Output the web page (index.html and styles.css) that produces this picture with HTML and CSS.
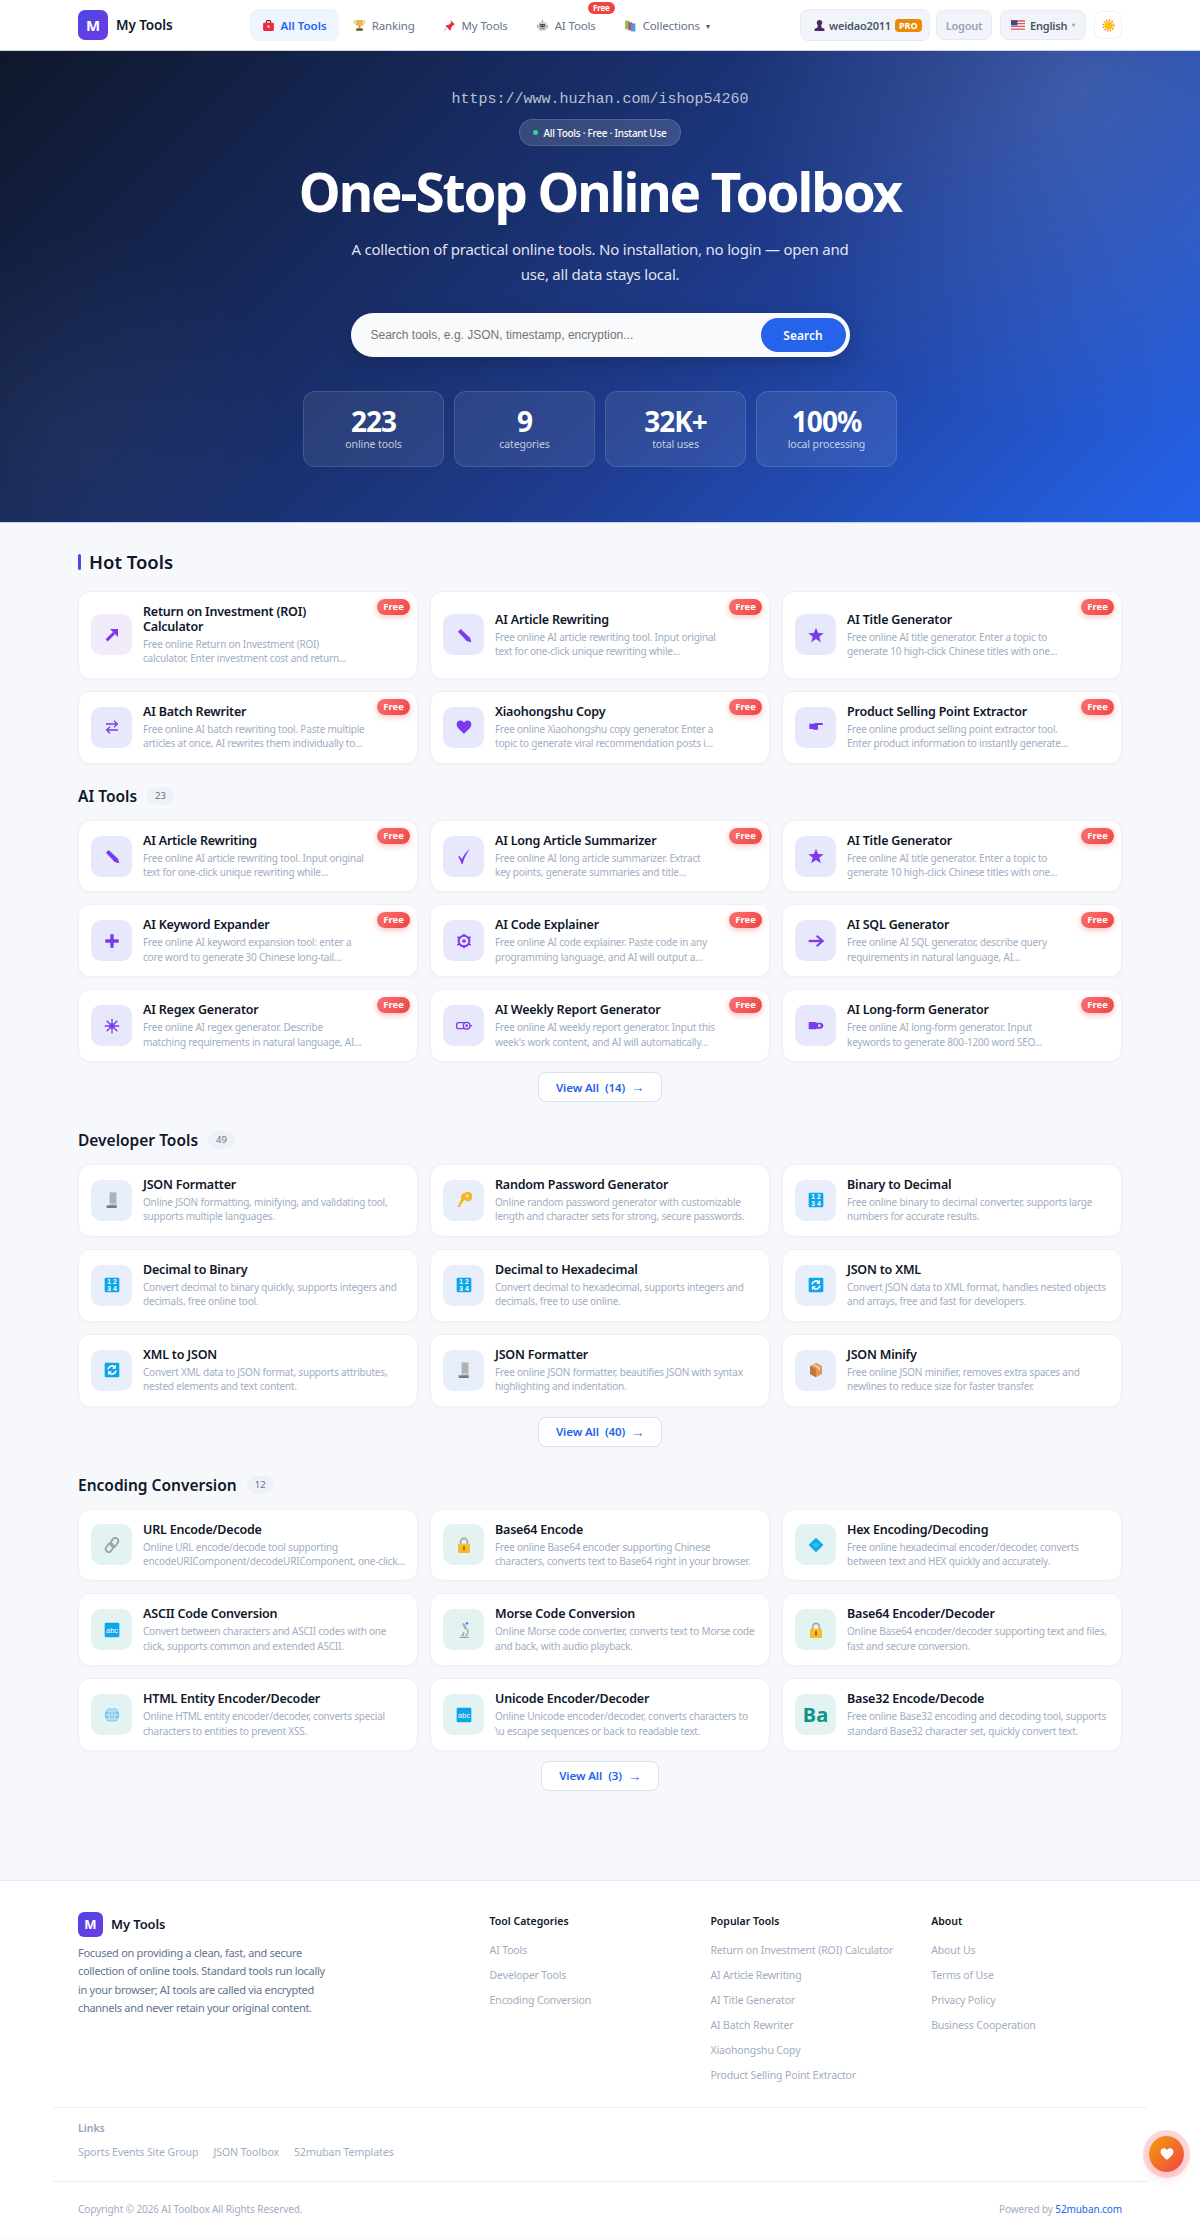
FILE: index.html
```html
<!DOCTYPE html>
<html lang="en">
<head>
    <meta charset="UTF-8">
    <meta name="viewport" content="width=device-width, initial-scale=1.0">
    <title>My Tools - One-Stop Online Toolbox</title>
    <link rel="stylesheet" href="styles.css">
</head>
<body>
    <!-- Icon sprite -->
    <svg class="sprite" xmlns="http://www.w3.org/2000/svg">
        <symbol id="i-toolbox" viewBox="0 0 24 24"><path d="M8 8V5a2 2 0 0 1 2-2h4a2 2 0 0 1 2 2v3" fill="none" stroke="#7f1d1d" stroke-width="2"/><rect x="2" y="7" width="20" height="15" rx="2" fill="#ef2b3a"/><rect x="10" y="12" width="4" height="4" fill="#fde2e2"/></symbol>
        <symbol id="i-trophy" viewBox="0 0 24 24"><path d="M6 2h12v6a6 6 0 0 1-12 0z" fill="#e5b64a"/><path d="M6 4H2c0 4 2 6 5 6M18 4h4c0 4-2 6-5 6" fill="none" stroke="#d7a437" stroke-width="1.6"/><rect x="10.5" y="13" width="3" height="4" fill="#c9962c"/><rect x="6" y="17" width="12" height="5" fill="#7a5a3a"/></symbol>
        <symbol id="i-pin" viewBox="0 0 24 24"><path d="M14 2l8 8-3 1-4 5 0 4-2 1-8-8 1-2 4 0 5-4z" fill="#e8303a"/><path d="M7 16l-5 6" stroke="#a8a8b0" stroke-width="1.6"/></symbol>
        <symbol id="i-robot" viewBox="0 0 24 24"><rect x="4" y="6" width="16" height="15" rx="4" fill="#c8ccd4"/><rect x="7" y="9" width="10" height="6" rx="2" fill="#3f4654"/><circle cx="9.5" cy="12" r="1.2" fill="#7dd3fc"/><circle cx="14.5" cy="12" r="1.2" fill="#7dd3fc"/><rect x="8" y="17" width="8" height="2" fill="#e0646c"/><rect x="11" y="2" width="2" height="4" fill="#e0646c"/><rect x="2" y="11" width="2" height="5" fill="#9aa1ad"/><rect x="20" y="11" width="2" height="5" fill="#9aa1ad"/></symbol>
        <symbol id="i-books" viewBox="0 0 24 24"><rect x="2" y="3" width="8" height="16" fill="#8bc34a"/><rect x="8" y="6" width="7" height="15" fill="#c2497e"/><rect x="13" y="8" width="8" height="15" fill="#4a9edb"/></symbol>
        <symbol id="i-user" viewBox="0 0 24 24"><circle cx="12" cy="7" r="5" fill="#4a2a5e"/><path d="M9 11h6l1 5 5 2v4H3v-4l5-2z" fill="#4a2a5e"/></symbol>
        <symbol id="i-flag" viewBox="0 0 24 16"><rect width="24" height="16" fill="#f4f4f6"/><path d="M0 0h24v2.3H0zM0 4.6h24v2.3H0zM0 9.2h24v2.3H0zM0 13.8h24V16H0z" fill="#d9535f"/><rect width="11" height="8.5" fill="#3c4a8a"/></symbol>
        <symbol id="i-sun" viewBox="0 0 24 24"><circle cx="12" cy="12" r="8" fill="#ffc107"/><circle cx="12" cy="12" r="10" fill="none" stroke="#f4701e" stroke-width="2.4" stroke-dasharray="2.6 2.6"/></symbol>
        <symbol id="i-up" viewBox="0 0 24 24"><path d="M4 20L15 9" stroke="currentColor" stroke-width="4.500"/><path d="M9 3H21V15z" fill="currentColor"/></symbol>
        <symbol id="i-pencil" viewBox="0 0 24 24"><path d="M3 7l4-4 14 13 2 7-7-2z" fill="currentColor"/></symbol>
        <symbol id="i-star" viewBox="0 0 24 24"><path d="M12 1l3.100 8 8.400.3-6.600 5.300 2.300 8.200-7.200-4.700-7.200 4.700 2.300-8L.5 9.300 8.900 9z" fill="currentColor"/></symbol>
        <symbol id="i-swap" viewBox="0 0 24 24"><path d="M3 8h17M15 3l5 5-5 5M21 17H4M9 12l-5 5 5 5" fill="none" stroke="currentColor" stroke-width="2" transform="translate(0 -.5)"/></symbol>
        <symbol id="i-heart" viewBox="0 0 24 24"><path d="M12 22C5 16 1 12.500 1 8a5.800 5.800 0 0 1 11-2.600A5.800 5.800 0 0 1 23 8c0 4.500-4 8-11 14z" fill="currentColor"/></symbol>
        <symbol id="i-hand" viewBox="0 0 24 24"><path d="M2 7h6l3-1h11v3h-7v7H8l-1-1H2z" fill="currentColor"/></symbol>
        <symbol id="i-check" viewBox="0 0 24 24"><path d="M3 13l2-1 4 5C11 11 15 6 21 1c-5 7-9 14-11 23H8.500C7 19 5.500 16 3 13z" fill="currentColor"/></symbol>
        <symbol id="i-plus" viewBox="0 0 24 24"><path d="M9.500 2h5v7.500H22v5h-7.500V22h-5v-7.500H2v-5h7.500z" fill="currentColor"/></symbol>
        <symbol id="i-gear" viewBox="0 0 24 24"><circle cx="12" cy="12" r="8" fill="none" stroke="currentColor" stroke-width="3"/><circle cx="12" cy="12" r="2.800" fill="currentColor"/><path d="M12 1v3M12 20v3M2 6l2.500 1.500M22 6l-2.500 1.500M2 18l2.500-1.500M22 18l-2.500-1.500" stroke="currentColor" stroke-width="2.500"/></symbol>
        <symbol id="i-arrow" viewBox="0 0 24 24"><path d="M1 12h19" stroke="currentColor" stroke-width="3.500"/><path d="M13 4l9 8-9 8" fill="none" stroke="currentColor" stroke-width="3"/></symbol>
        <symbol id="i-spark" viewBox="0 0 24 24"><path d="M12 1v22M1 12h22M4 4l16 16M20 4L4 20" stroke="currentColor" stroke-width="2"/><circle cx="12" cy="12" r="4" fill="currentColor"/></symbol>
        <symbol id="i-tag" viewBox="0 0 24 24"><path d="M13 7H4a3 3 0 0 0-3 3v3a3 3 0 0 0 3 3h9" fill="none" stroke="currentColor" stroke-width="2"/><circle cx="16" cy="11.500" r="5" fill="none" stroke="currentColor" stroke-width="2"/><circle cx="16" cy="11.500" r="2" fill="currentColor"/><path d="M21 11.500h3" stroke="currentColor" stroke-width="2"/></symbol>
        <symbol id="i-pen" viewBox="0 0 24 24"><rect x="1" y="6" width="11" height="11" rx="1" fill="currentColor"/><path d="M12 7h6c3 0 5 2 5 4.500s-2 4.500-5 4.500h-6z" fill="currentColor"/><circle cx="17" cy="11.500" r="2" fill="#e6e6fb"/></symbol>
        <symbol id="i-abacus" viewBox="0 0 24 24"><rect x="8" y="0" width="11" height="21" fill="#c6c9cd"/><path d="M9 3h9M9 6h9M9 9h9M9 12h9M9 15h9" stroke="#8b8f96" stroke-width="1.200"/><rect x="4" y="20" width="15" height="4" fill="#76797f"/></symbol>
        <symbol id="i-key" viewBox="0 0 24 24"><path d="M14 1a7 7 0 0 0-6 10L2 22l4 1 1-4 2-1 1-3 3-3a7 7 0 1 0 1-11zm3 3a2 2 0 1 1-.1 0z" fill="#f4b62c" fill-rule="evenodd"/></symbol>
        <symbol id="i-num" viewBox="0 0 24 24"><rect x="1" y="1" width="22" height="22" rx="2" fill="#0ea5e9"/><text x="12" y="11" class="sprite-text" text-anchor="middle">1 2</text><text x="12" y="21" class="sprite-text" text-anchor="middle">3 4</text></symbol>
        <symbol id="i-sync" viewBox="0 0 24 24"><rect x="1" y="1" width="22" height="22" rx="2" fill="#0ea5e9"/><path d="M6 11a6 6 0 0 1 10-3.500M18 13a6 6 0 0 1-10 3.500" fill="none" stroke="#fff" stroke-width="2.400"/><path d="M18 4v6h-6zM6 20v-6h6z" fill="#fff"/></symbol>
        <symbol id="i-box" viewBox="0 0 24 24"><path d="M12 1l9 5v12l-9 5-9-5V6z" fill="#d99a5b"/><path d="M12 11v12l-9-5V6z" fill="#b97a3e"/><path d="M6 4.300l9 5v4l3-1.600v-4l-9-5z" fill="#f3cf96"/></symbol>
        <symbol id="i-link" viewBox="0 0 24 24"><g fill="none" stroke="#9a9da3" stroke-width="2.600"><rect x="11" y="1" width="9" height="14" rx="4.500" transform="rotate(35 15.500 8)"/><rect x="4" y="9" width="9" height="14" rx="4.500" transform="rotate(35 8.500 16)"/></g></symbol>
        <symbol id="i-lock" viewBox="0 0 24 24"><path d="M7 11V7a5 5 0 0 1 10 0v4" fill="none" stroke="#a6a9ae" stroke-width="2.600"/><rect x="3" y="10" width="18" height="14" rx="2" fill="#f5bd2e"/><rect x="11" y="14" width="2" height="6" fill="#6b4e0a"/></symbol>
        <symbol id="i-diamond" viewBox="0 0 24 24"><path d="M12 1l11 11-11 11L1 12z" fill="#0ea5e9"/><path d="M12 7l5 5-5 5-5-5z" fill="#38bdf8"/></symbol>
        <symbol id="i-abc" viewBox="0 0 24 24"><rect x="1" y="1" width="22" height="22" rx="2" fill="#0ea5e9"/><text x="12" y="16" class="sprite-abc" text-anchor="middle">abc</text></symbol>
        <symbol id="i-scope" viewBox="0 0 24 24"><path d="M5 22h14v2H5zM8 21l3-6 2 1-2 5z" fill="#9da1a8"/><path d="M9 3l3-2 5 9-3 2z" fill="#a7abb2"/><path d="M14 1l3-1 2 3-3 1z" fill="#3b82f6"/><path d="M17 11c2 3 1 8-3 10" fill="none" stroke="#9da1a8" stroke-width="2"/></symbol>
        <symbol id="i-globe" viewBox="0 0 24 24"><circle cx="12" cy="12" r="11" fill="#7cc4ef"/><g fill="none" stroke="#dff1fc" stroke-width="1.200"><ellipse cx="12" cy="12" rx="5" ry="11"/><path d="M12 1v22M1 12h22M3 6h18M3 18h18"/></g></symbol>
    </svg>

    <header class="topbar">
        <a class="brand">
            <span class="brand-logo">M</span>
            <span class="brand-name">My Tools</span>
        </a>
        <nav class="main-nav">
            <a class="nav-link active"><svg class="nav-icon"><use href="#i-toolbox"/></svg>All Tools</a>
            <a class="nav-link"><svg class="nav-icon"><use href="#i-trophy"/></svg>Ranking</a>
            <a class="nav-link"><svg class="nav-icon"><use href="#i-pin"/></svg>My Tools</a>
            <a class="nav-link nav-ai"><svg class="nav-icon"><use href="#i-robot"/></svg>AI Tools<span class="nav-free">Free</span></a>
            <a class="nav-link"><svg class="nav-icon"><use href="#i-books"/></svg>Collections<span class="caret">▾</span></a>
        </nav>
        <div class="nav-right">
            <div class="user-chip"><svg class="nav-icon"><use href="#i-user"/></svg>weidao2011<span class="pro-tag">PRO</span></div>
            <button class="ghost-btn">Logout</button>
            <button class="ghost-btn lang-btn"><svg class="flag"><use href="#i-flag"/></svg>English<span class="caret small">▾</span></button>
            <button class="theme-btn"><svg class="nav-icon"><use href="#i-sun"/></svg></button>
        </div>
    </header>

    <section class="hero">
        <p class="hero-url">https://www.huzhan.com/ishop54260</p>
        <div class="hero-pill"><span class="dot"></span>All Tools · Free · Instant Use</div>
        <h1>One-Stop Online Toolbox</h1>
        <p class="hero-sub">A collection of practical online tools. No installation, no login — open and use, all data stays local.</p>
        <form class="search-box">
            <input type="text" placeholder="Search tools, e.g. JSON, timestamp, encryption...">
            <button type="button">Search</button>
        </form>
        <div class="stats">
            <div class="stat"><strong>223</strong><span>online tools</span></div>
            <div class="stat"><strong>9</strong><span>categories</span></div>
            <div class="stat"><strong>32K+</strong><span>total uses</span></div>
            <div class="stat"><strong>100%</strong><span>local processing</span></div>
        </div>
    </section>

    <main class="content">
        <section class="tool-section hot">
            <h2 class="hot-title">Hot Tools</h2>
            <div class="tool-grid">
                <a class="tool-card tagged"><span class="tool-icon tint-roi"><svg><use href="#i-up"/></svg></span><div class="tool-text"><h3>Return on Investment (ROI) Calculator</h3><p>Free online Return on Investment (ROI) calculator. Enter investment cost and return...</p></div><span class="free-tag">Free</span></a>
                <a class="tool-card tagged"><span class="tool-icon tint-ai"><svg><use href="#i-pencil"/></svg></span><div class="tool-text"><h3>AI Article Rewriting</h3><p>Free online AI article rewriting tool. Input original text for one-click unique rewriting while...</p></div><span class="free-tag">Free</span></a>
                <a class="tool-card tagged"><span class="tool-icon tint-ai"><svg><use href="#i-star"/></svg></span><div class="tool-text"><h3>AI Title Generator</h3><p>Free online AI title generator. Enter a topic to generate 10 high-click Chinese titles with one...</p></div><span class="free-tag">Free</span></a>
                <a class="tool-card tagged"><span class="tool-icon tint-ai"><svg><use href="#i-swap"/></svg></span><div class="tool-text"><h3>AI Batch Rewriter</h3><p>Free online AI batch rewriting tool. Paste multiple articles at once, AI rewrites them individually to...</p></div><span class="free-tag">Free</span></a>
                <a class="tool-card tagged"><span class="tool-icon tint-ai"><svg><use href="#i-heart"/></svg></span><div class="tool-text"><h3>Xiaohongshu Copy</h3><p>Free online Xiaohongshu copy generator. Enter a topic to generate viral recommendation posts i...</p></div><span class="free-tag">Free</span></a>
                <a class="tool-card tagged"><span class="tool-icon tint-ai"><svg><use href="#i-hand"/></svg></span><div class="tool-text"><h3>Product Selling Point Extractor</h3><p>Free online product selling point extractor tool. Enter product information to instantly generate...</p></div><span class="free-tag">Free</span></a>
            </div>
        </section>

        <section class="tool-section">
            <div class="section-head"><h2>AI Tools</h2><span class="count">23</span></div>
            <div class="tool-grid">
                <a class="tool-card tagged"><span class="tool-icon tint-ai"><svg><use href="#i-pencil"/></svg></span><div class="tool-text"><h3>AI Article Rewriting</h3><p>Free online AI article rewriting tool. Input original text for one-click unique rewriting while...</p></div><span class="free-tag">Free</span></a>
                <a class="tool-card tagged"><span class="tool-icon tint-ai"><svg><use href="#i-check"/></svg></span><div class="tool-text"><h3>AI Long Article Summarizer</h3><p>Free online AI long article summarizer. Extract key points, generate summaries and title...</p></div><span class="free-tag">Free</span></a>
                <a class="tool-card tagged"><span class="tool-icon tint-ai"><svg><use href="#i-star"/></svg></span><div class="tool-text"><h3>AI Title Generator</h3><p>Free online AI title generator. Enter a topic to generate 10 high-click Chinese titles with one...</p></div><span class="free-tag">Free</span></a>
                <a class="tool-card tagged"><span class="tool-icon tint-ai"><svg><use href="#i-plus"/></svg></span><div class="tool-text"><h3>AI Keyword Expander</h3><p>Free online AI keyword expansion tool: enter a core word to generate 30 Chinese long-tail...</p></div><span class="free-tag">Free</span></a>
                <a class="tool-card tagged"><span class="tool-icon tint-ai"><svg><use href="#i-gear"/></svg></span><div class="tool-text"><h3>AI Code Explainer</h3><p>Free online AI code explainer. Paste code in any programming language, and AI will output a...</p></div><span class="free-tag">Free</span></a>
                <a class="tool-card tagged"><span class="tool-icon tint-ai"><svg><use href="#i-arrow"/></svg></span><div class="tool-text"><h3>AI SQL Generator</h3><p>Free online AI SQL generator, describe query requirements in natural language, AI...</p></div><span class="free-tag">Free</span></a>
                <a class="tool-card tagged"><span class="tool-icon tint-ai"><svg><use href="#i-spark"/></svg></span><div class="tool-text"><h3>AI Regex Generator</h3><p>Free online AI regex generator. Describe matching requirements in natural language, AI...</p></div><span class="free-tag">Free</span></a>
                <a class="tool-card tagged"><span class="tool-icon tint-ai"><svg><use href="#i-tag"/></svg></span><div class="tool-text"><h3>AI Weekly Report Generator</h3><p>Free online AI weekly report generator. Input this week's work content, and AI will automatically...</p></div><span class="free-tag">Free</span></a>
                <a class="tool-card tagged"><span class="tool-icon tint-ai"><svg><use href="#i-pen"/></svg></span><div class="tool-text"><h3>AI Long-form Generator</h3><p>Free online AI long-form generator. Input keywords to generate 800-1200 word SEO...</p></div><span class="free-tag">Free</span></a>
            </div>
            <div class="view-row"><a class="view-all"><b>View All</b><b>(14)</b><span class="view-arrow">→</span></a></div>
        </section>

        <section class="tool-section">
            <div class="section-head"><h2>Developer Tools</h2><span class="count">49</span></div>
            <div class="tool-grid">
                <a class="tool-card"><span class="tool-icon tint-dev"><svg><use href="#i-abacus"/></svg></span><div class="tool-text"><h3>JSON Formatter</h3><p>Online JSON formatting, minifying, and validating tool, supports multiple languages.</p></div></a>
                <a class="tool-card"><span class="tool-icon tint-dev"><svg><use href="#i-key"/></svg></span><div class="tool-text"><h3>Random Password Generator</h3><p>Online random password generator with customizable length and character sets for strong, secure passwords.</p></div></a>
                <a class="tool-card"><span class="tool-icon tint-dev"><svg><use href="#i-num"/></svg></span><div class="tool-text"><h3>Binary to Decimal</h3><p>Free online binary to decimal converter, supports large numbers for accurate results.</p></div></a>
                <a class="tool-card"><span class="tool-icon tint-dev"><svg><use href="#i-num"/></svg></span><div class="tool-text"><h3>Decimal to Binary</h3><p>Convert decimal to binary quickly, supports integers and decimals, free online tool.</p></div></a>
                <a class="tool-card"><span class="tool-icon tint-dev"><svg><use href="#i-num"/></svg></span><div class="tool-text"><h3>Decimal to Hexadecimal</h3><p>Convert decimal to hexadecimal, supports integers and decimals, free to use online.</p></div></a>
                <a class="tool-card"><span class="tool-icon tint-dev"><svg><use href="#i-sync"/></svg></span><div class="tool-text"><h3>JSON to XML</h3><p>Convert JSON data to XML format, handles nested objects and arrays, free and fast for developers.</p></div></a>
                <a class="tool-card"><span class="tool-icon tint-dev"><svg><use href="#i-sync"/></svg></span><div class="tool-text"><h3>XML to JSON</h3><p>Convert XML data to JSON format, supports attributes, nested elements and text content.</p></div></a>
                <a class="tool-card"><span class="tool-icon tint-dev"><svg><use href="#i-abacus"/></svg></span><div class="tool-text"><h3>JSON Formatter</h3><p>Free online JSON formatter, beautifies JSON with syntax highlighting and indentation.</p></div></a>
                <a class="tool-card"><span class="tool-icon tint-dev"><svg><use href="#i-box"/></svg></span><div class="tool-text"><h3>JSON Minify</h3><p>Free online JSON minifier, removes extra spaces and newlines to reduce size for faster transfer.</p></div></a>
            </div>
            <div class="view-row"><a class="view-all"><b>View All</b><b>(40)</b><span class="view-arrow">→</span></a></div>
        </section>

        <section class="tool-section">
            <div class="section-head"><h2>Encoding Conversion</h2><span class="count">12</span></div>
            <div class="tool-grid">
                <a class="tool-card"><span class="tool-icon tint-enc"><svg><use href="#i-link"/></svg></span><div class="tool-text"><h3>URL Encode/Decode</h3><p>Online URL encode/decode tool supporting encodeURIComponent/decodeURIComponent, one-click...</p></div></a>
                <a class="tool-card"><span class="tool-icon tint-enc"><svg><use href="#i-lock"/></svg></span><div class="tool-text"><h3>Base64 Encode</h3><p>Free online Base64 encoder supporting Chinese characters, converts text to Base64 right in your browser.</p></div></a>
                <a class="tool-card"><span class="tool-icon tint-enc"><svg><use href="#i-diamond"/></svg></span><div class="tool-text"><h3>Hex Encoding/Decoding</h3><p>Free online hexadecimal encoder/decoder, converts between text and HEX quickly and accurately.</p></div></a>
                <a class="tool-card"><span class="tool-icon tint-enc"><svg><use href="#i-abc"/></svg></span><div class="tool-text"><h3>ASCII Code Conversion</h3><p>Convert between characters and ASCII codes with one click, supports common and extended ASCII.</p></div></a>
                <a class="tool-card"><span class="tool-icon tint-enc"><svg><use href="#i-scope"/></svg></span><div class="tool-text"><h3>Morse Code Conversion</h3><p>Online Morse code converter, converts text to Morse code and back, with audio playback.</p></div></a>
                <a class="tool-card"><span class="tool-icon tint-enc"><svg><use href="#i-lock"/></svg></span><div class="tool-text"><h3>Base64 Encoder/Decoder</h3><p>Online Base64 encoder/decoder supporting text and files, fast and secure conversion.</p></div></a>
                <a class="tool-card"><span class="tool-icon tint-enc"><svg><use href="#i-globe"/></svg></span><div class="tool-text"><h3>HTML Entity Encoder/Decoder</h3><p>Online HTML entity encoder/decoder, converts special characters to entities to prevent XSS.</p></div></a>
                <a class="tool-card"><span class="tool-icon tint-enc"><svg><use href="#i-abc"/></svg></span><div class="tool-text"><h3>Unicode Encoder/Decoder</h3><p>Online Unicode encoder/decoder, converts characters to \u escape sequences or back to readable text.</p></div></a>
                <a class="tool-card"><span class="tool-icon tint-enc ba-icon">Ba</span><div class="tool-text"><h3>Base32 Encode/Decode</h3><p>Free online Base32 encoding and decoding tool, supports standard Base32 character set, quickly convert text.</p></div></a>
            </div>
            <div class="view-row"><a class="view-all"><b>View All</b><b>(3)</b><span class="view-arrow">→</span></a></div>
        </section>
    </main>

    <footer class="site-footer">
        <div class="footer-top">
            <div class="footer-about">
                <div class="footer-brand"><span class="brand-logo">M</span><span class="brand-name">My Tools</span></div>
                <p>Focused on providing a clean, fast, and secure collection of online tools. Standard tools run locally in your browser; AI tools are called via encrypted channels and never retain your original content.</p>
            </div>
            <div class="footer-col">
                <h4>Tool Categories</h4>
                <a>AI Tools</a><a>Developer Tools</a><a>Encoding Conversion</a>
            </div>
            <div class="footer-col">
                <h4>Popular Tools</h4>
                <a>Return on Investment (ROI) Calculator</a><a>AI Article Rewriting</a><a>AI Title Generator</a><a>AI Batch Rewriter</a><a>Xiaohongshu Copy</a><a>Product Selling Point Extractor</a>
            </div>
            <div class="footer-col">
                <h4>About</h4>
                <a>About Us</a><a>Terms of Use</a><a>Privacy Policy</a><a>Business Cooperation</a>
            </div>
        </div>
        <div class="footer-links">
            <h5>Links</h5>
            <div class="footer-link-row"><a>Sports Events Site Group</a><a>JSON Toolbox</a><a>52muban Templates</a></div>
        </div>
        <div class="footer-bottom">
            <span>Copyright © 2026 AI Toolbox All Rights Reserved.</span>
            <span>Powered by <a>52muban.com</a></span>
        </div>
    </footer>

    <!-- Floating donate button -->
    <a class="float-btn"><svg><use href="#i-heart"/></svg></a>
</body>
</html>
```

FILE: styles.css
```css
* {
    box-sizing: border-box;
}
body {
    font-family: 'Noto Sans', 'Open Sans', sans-serif;
    margin: 0;
    padding: 0;
    background-color: #f7f8fc;
    color: #0f172a;
}
a {
    text-decoration: none;
    color: inherit;
}
.sprite {
    display: none;
}
.sprite-text {
    font-family: 'Liberation Sans', sans-serif;
    font-size: 10px;
    font-weight: 700;
    fill: #fff;
}
.sprite-abc {
    font-family: 'Liberation Sans', sans-serif;
    font-size: 11px;
    fill: #fff;
}

/* Top bar */
.topbar {
    display: flex;
    align-items: center;
    height: 51px;
    padding: 0 78px;
    background-color: #fff;
    border-bottom: 1px solid #cbd5e1;
}
.brand {
    display: flex;
    align-items: center;
    gap: 8px;
}
.brand-logo {
    display: flex;
    align-items: center;
    justify-content: center;
    width: 30px;
    height: 30px;
    border-radius: 7px;
    background: linear-gradient(135deg, #4f46e5, #6d3be0);
    color: #fff;
    font-size: 15px;
    font-weight: 700;
}
.brand-name {
    font-size: 13.500px;
    font-weight: 600;
    letter-spacing: -0.1px;
}
.main-nav {
    display: flex;
    align-items: center;
    gap: 4px;
    margin-left: 77px;
}
.nav-link {
    position: relative;
    display: flex;
    align-items: center;
    gap: 6px;
    height: 32px;
    padding: 0 12px;
    border-radius: 8px;
    font-size: 11.500px;
    letter-spacing: -0.15px;
    color: #64748b;
}
.nav-link.active {
    margin-right: -2px;
    background-color: #eff5ff;
    color: #2563eb;
    font-weight: 600;
    letter-spacing: 0;
}
.nav-icon {
    width: 13px;
    height: 13px;
    flex: none;
}
.nav-free {
    position: absolute;
    top: -7px;
    right: -7px;
    padding: 0 5px;
    height: 12px;
    line-height: 12px;
    border-radius: 6px;
    background-color: #ef4444;
    color: #fff;
    font-size: 8px;
    font-weight: 700;
}
.caret {
    font-size: 8px;
    color: #475569;
}
.caret.small {
    font-size: 6px;
    color: #94a3b8;
}
.nav-right {
    display: flex;
    align-items: center;
    margin-left: auto;
    gap: 6px;
}
.user-chip {
    display: flex;
    align-items: center;
    gap: 6px;
    width: 130px;
    height: 32px;
    padding-left: 12px;
    border: 1px solid #e6ebf3;
    border-radius: 8px;
    background-color: #f1f5f9;
    color: #475569;
    font-size: 11px;
    font-weight: 600;
    letter-spacing: -0.2px;
}
.user-chip .nav-icon {
    margin-right: -3px;
}
.pro-tag {
    margin-left: -2px;
    padding: 0 4px;
    border-radius: 4px;
    background-color: #ea8a0b;
    color: #fff;
    font-size: 9px;
    font-weight: 700;
    line-height: 13px;
    letter-spacing: 0;
}
.ghost-btn {
    display: flex;
    align-items: center;
    justify-content: center;
    width: 56px;
    height: 30px;
    padding: 0;
    border: 1px solid #e6ebf3;
    border-radius: 8px;
    background-color: #f1f5f9;
    color: #94a3b8;
    font-family: inherit;
    font-size: 11px;
    font-weight: 600;
    letter-spacing: -0.2px;
}
.lang-btn {
    gap: 5px;
    width: 86px;
    margin-left: 2px;
    color: #475569;
}
.flag {
    width: 14px;
    height: 10px;
}
.theme-btn {
    display: flex;
    align-items: center;
    justify-content: center;
    width: 28px;
    height: 28px;
    margin-left: 2px;
    padding: 0;
    border: 1px solid #eef1f6;
    border-radius: 8px;
    background-color: #fff;
}

/* Hero */
.hero {
    display: flex;
    flex-direction: column;
    align-items: center;
    height: 471px;
    padding-top: 40px;
    color: #fff;
    background:
        radial-gradient(circle at 90% 8%, rgba(255, 255, 255, 0.13), transparent 30%),
        radial-gradient(circle at 6% 82%, rgba(255, 255, 255, 0.04), transparent 18%),
        linear-gradient(135deg, #0f172a 0%, #1e3a8a 58%, #2563eb 100%);
}
.hero-url {
    margin: 0;
    font-family: 'Liberation Mono', monospace;
    font-size: 15px;
    line-height: 18px;
    color: #b9c0d2;
}
.hero-pill {
    display: flex;
    align-items: center;
    gap: 6px;
    height: 27px;
    margin-top: 10px;
    padding: 0 14px 0 13px;
    border: 1px solid rgba(255, 255, 255, 0.14);
    border-radius: 14px;
    background-color: rgba(255, 255, 255, 0.14);
    font-size: 10px;
    font-weight: 500;
    letter-spacing: -0.26px;
}
.dot {
    width: 5px;
    height: 5px;
    border-radius: 50%;
    background-color: #34d399;
}
.hero h1 {
    margin: 16px 0 0;
    font-size: 53px;
    font-weight: 700;
    line-height: 60px;
    letter-spacing: -2.1px;
}
.hero-sub {
    width: 520px;
    margin: 15px 0 0;
    font-size: 15px;
    line-height: 25px;
    text-align: center;
    letter-spacing: -0.22px;
    color: rgba(255, 255, 255, 0.88);
}
.search-box {
    display: flex;
    align-items: center;
    width: 499px;
    height: 44px;
    margin-top: 26px;
    padding-right: 4px;
    border-radius: 22px;
    background-color: #f8fafc;
    box-shadow: 0 6px 18px rgba(15, 23, 42, 0.25);
}
.search-box input {
    flex: 1;
    padding: 0 20px;
    border: none;
    background: none;
    outline: none;
    font-family: 'Liberation Sans', Arial, sans-serif;
    font-size: 12px;
}
.search-box input::placeholder {
    color: #757575;
}
.search-box button {
    width: 85px;
    height: 34px;
    border: none;
    border-radius: 17px;
    background-color: #2563eb;
    color: #fff;
    font-family: inherit;
    font-size: 12px;
    font-weight: 600;
}
.stats {
    display: flex;
    gap: 10px;
    margin-top: 34px;
}
.stat {
    display: flex;
    flex-direction: column;
    align-items: center;
    justify-content: center;
    width: 141px;
    height: 76px;
    border: 1px solid rgba(255, 255, 255, 0.12);
    border-radius: 12px;
    background-color: rgba(255, 255, 255, 0.08);
}
.stat strong {
    font-size: 28px;
    font-weight: 700;
    line-height: 30px;
    letter-spacing: -1px;
}
.stat span {
    font-size: 10.500px;
    line-height: 16px;
    letter-spacing: -0.1px;
    color: rgba(255, 255, 255, 0.72);
}

/* Tool sections */
.content {
    padding: 26px 78px 89px;
    border-top: 1px solid #c7d2fe;
}
.tool-section {
    margin-bottom: 26px;
}
.tool-section.hot {
    margin-bottom: 20px;
}
.tool-section:last-child {
    margin-bottom: 0;
}
.hot-title {
    position: relative;
    height: 26px;
    margin: 0 0 16px;
    padding-left: 11px;
    font-size: 18.500px;
    font-weight: 600;
    line-height: 26px;
}
.hot-title::before {
    content: "";
    position: absolute;
    left: 0;
    top: 5px;
    width: 3px;
    height: 16px;
    border-radius: 2px;
    background-color: #4f46e5;
}
.section-head {
    display: flex;
    align-items: center;
    gap: 10px;
    height: 24px;
    margin-bottom: 12px;
}
.section-head h2 {
    margin: 0;
    font-size: 15.500px;
    font-weight: 600;
}
.count {
    height: 18px;
    padding: 0 8px;
    border-radius: 9px;
    background-color: #eef1f7;
    color: #64748b;
    font-size: 9.500px;
    line-height: 18px;
}
.tool-grid {
    display: grid;
    grid-template-columns: repeat(3, minmax(0, 1fr));
    gap: 12px;
}
.tool-card {
    position: relative;
    display: flex;
    align-items: center;
    gap: 11px;
    padding: 12px 11px 12px 12px;
    border: 1px solid #edf0f6;
    border-radius: 12px;
    background-color: #fff;
    box-shadow: 0 1px 3px rgba(15, 23, 42, 0.03);
}
.tool-card.tagged {
    padding-right: 52px;
}
.tool-icon {
    display: flex;
    align-items: center;
    justify-content: center;
    flex: none;
    width: 41px;
    height: 41px;
    border-radius: 10px;
    color: #7c3aed;
}
.tool-icon svg {
    width: 16px;
    height: 16px;
}
.tint-roi {
    background-color: #f1ebfa;
}
.tint-ai {
    background-color: #e7e8fc;
}
.tint-dev {
    background-color: #e9eefb;
}
.tint-enc {
    background-color: #e3f3f1;
}
.ba-icon {
    color: #0d9488;
    font-size: 20px;
    font-weight: 700;
}
.tool-text {
    min-width: 0;
}
.tool-text h3 {
    margin: 0 0 3px;
    font-size: 12.500px;
    font-weight: 600;
    line-height: 15px;
    letter-spacing: -0.2px;
}
.tool-text p {
    margin: 0;
    font-size: 10px;
    line-height: 14.400px;
    letter-spacing: -0.2px;
    color: #a0aec0;
}
.free-tag {
    position: absolute;
    top: 7px;
    right: 7px;
    width: 33px;
    height: 16px;
    border-radius: 8px;
    background: linear-gradient(135deg, #f87171, #ef4444);
    box-shadow: 0 2px 6px rgba(239, 68, 68, 0.35);
    color: #fff;
    font-size: 9.500px;
    font-weight: 700;
    line-height: 16px;
    text-align: center;
}
.view-row {
    display: flex;
    justify-content: center;
    margin-top: 10px;
}
.view-all {
    display: flex;
    align-items: center;
    gap: 6px;
    height: 30px;
    padding: 0 17px;
    border: 1px solid #d8e0ec;
    border-radius: 8px;
    background-color: #fff;
    color: #2563eb;
    font-size: 11.500px;
    letter-spacing: -0.1px;
}
.view-all b {
    font-weight: 600;
}
.view-arrow {
    font-size: 13px;
}

/* Footer */
.site-footer {
    padding: 0 53px;
    background-color: #fff;
    border-top: 1px solid #e8ecf4;
}
.footer-top {
    display: grid;
    grid-template-columns: minmax(0, 2fr) repeat(3, minmax(0, 1fr));
    gap: 30px;
    height: 227px;
    padding: 31px 25px 0;
    border-bottom: 1px solid #eef0f5;
}
.footer-brand {
    display: flex;
    align-items: center;
    gap: 8px;
}
.footer-brand .brand-logo {
    width: 25px;
    height: 25px;
    font-size: 13px;
    border-radius: 6px;
}
.footer-brand .brand-name {
    font-size: 13px;
}
.footer-about p {
    width: 252px;
    margin: 7px 0 0;
    font-size: 11px;
    line-height: 18.400px;
    letter-spacing: -0.3px;
    color: #64748b;
}
.footer-col {
    display: flex;
    flex-direction: column;
    align-items: flex-start;
}
.footer-col h4 {
    margin: 0 0 8px;
    font-size: 10.500px;
    font-weight: 600;
    line-height: 18px;
}
.footer-col a {
    font-size: 10.500px;
    line-height: 25px;
    letter-spacing: -0.14px;
    color: #a0aec0;
    white-space: nowrap;
}
.footer-links {
    height: 74px;
    padding: 11px 25px 0;
    border-bottom: 1px solid #e8eef8;
}
.footer-links h5 {
    margin: 0 0 6px;
    font-size: 10.500px;
    font-weight: 600;
    line-height: 18px;
    color: #94a3b8;
}
.footer-link-row {
    display: flex;
    gap: 15px;
    font-size: 10.500px;
    line-height: 18px;
    letter-spacing: -0.05px;
    color: #a0aec0;
}
.footer-bottom {
    display: flex;
    justify-content: space-between;
    height: 56px;
    padding: 18px 25px 0;
    font-size: 10px;
    line-height: 18px;
    letter-spacing: -0.1px;
    color: #a0aec0;
}
.footer-bottom a {
    color: #2563eb;
}

/* Floating button */
.float-btn {
    position: fixed;
    right: 16px;
    bottom: 67px;
    display: flex;
    align-items: center;
    justify-content: center;
    width: 35px;
    height: 36px;
    border-radius: 50%;
    background: linear-gradient(135deg, #f59e0b, #ef4444);
    box-shadow: 0 0 0 6px rgba(239, 68, 68, 0.2), 0 6px 14px rgba(239, 68, 68, 0.2);
    color: #fff;
}
.float-btn svg {
    width: 14px;
    height: 14px;
}
```
